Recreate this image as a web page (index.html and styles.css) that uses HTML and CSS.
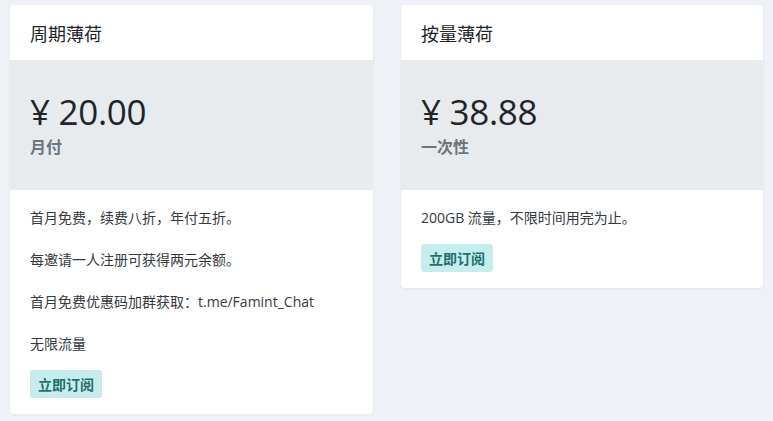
FILE: index.html
```html
<!DOCTYPE html>
<html lang="zh">
<head>
<meta charset="utf-8">
<link rel="stylesheet" href="styles.css">
</head>
<body>
<div class="plans">
  <div class="card">
    <div class="card-head">周期薄荷</div>
    <div class="card-price">
      <div class="price">¥ 20.00</div>
      <div class="period">月付</div>
    </div>
    <div class="card-body">
      <p>首月免费，续费八折，年付五折。</p>
      <p>每邀请一人注册可获得两元余额。</p>
      <p>首月免费优惠码加群获取：t.me/Famint_Chat</p>
      <p class="last">无限流量</p>
      <button class="btn">立即订阅</button>
    </div>
  </div>
  <div class="card">
    <div class="card-head">按量薄荷</div>
    <div class="card-price">
      <div class="price">¥ 38.88</div>
      <div class="period">一次性</div>
    </div>
    <div class="card-body">
      <p class="last">200GB 流量，不限时间用完为止。</p>
      <button class="btn">立即订阅</button>
    </div>
  </div>
</div>
</body>
</html>
```
FILE: styles.css
```css
html, body {
  margin: 0;
  padding: 0;
  background: #eef1f6;
  font-family: "Open Sans", "Noto Sans CJK SC", sans-serif;
}
.plans {
  display: grid;
  grid-template-columns: 363px 362px;
  column-gap: 28px;
  padding: 5px 10px;
  align-items: start;
}
.card {
  background: #fff;
  border-radius: 4px;
  box-shadow: 0 1px 3px rgba(0, 0, 0, 0.06);
  overflow: hidden;
}
.card-head {
  height: 55px;
  display: flex;
  align-items: center;
  padding: 0 20px;
  font-size: 18px;
  color: #212529;
}
.card-price {
  background: #e8ebee;
  height: 130px;
  box-sizing: border-box;
  padding: 30px 20px 0;
}
.price {
  font-size: 35px;
  font-weight: 500;
  line-height: 44px;
  letter-spacing: -0.3px;
  color: #212529;
}
.period {
  margin-top: 1px;
  font-size: 16px;
  font-weight: 700;
  line-height: 24px;
  color: #6c757d;
}
.card-body {
  padding: 15px 20px 16px;
}
.card-body p {
  margin: 0 0 16px;
  font-size: 14px;
  line-height: 26px;
  color: #343a40;
}
.card-body p.last {
  margin-bottom: 13px;
}
.btn {
  display: block;
  height: 28px;
  padding: 0 8px;
  border: 0;
  border-radius: 3px;
  background: #c7ecec;
  color: #20706f;
  font-family: "Open Sans", "Noto Sans CJK SC", sans-serif;
  font-size: 14px;
  font-weight: 700;
}
```
